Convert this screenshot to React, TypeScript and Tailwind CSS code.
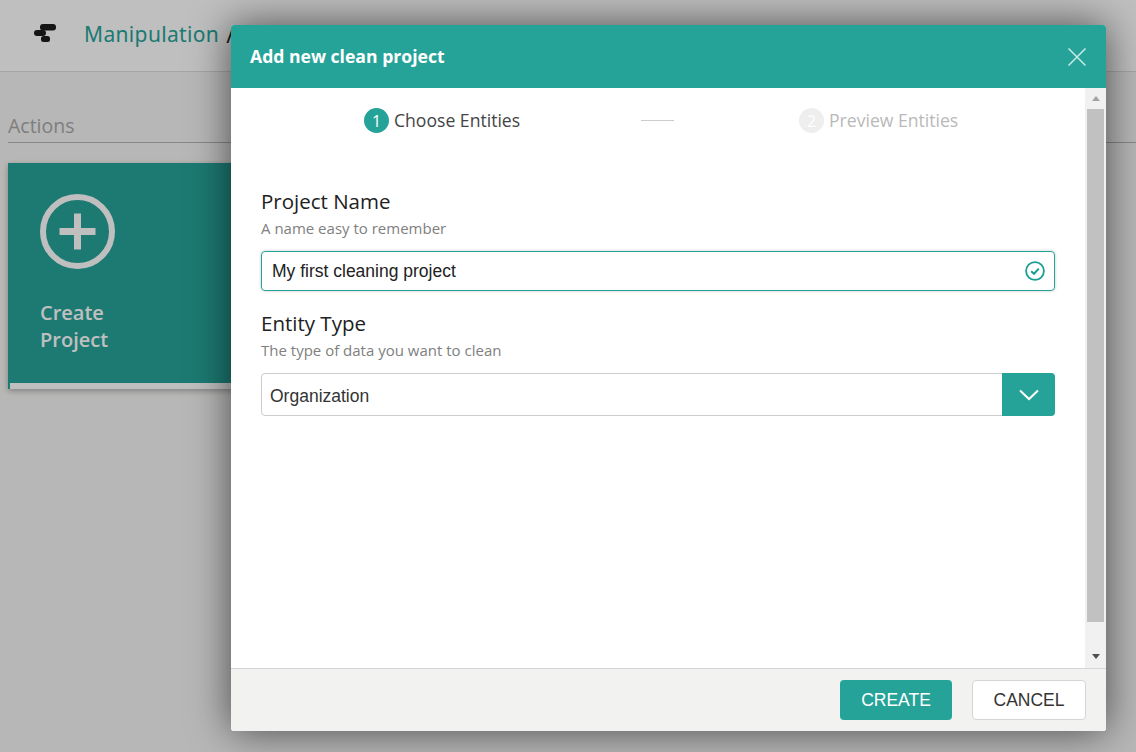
const OPEN_SANS = "font-['Open_Sans',sans-serif]"
const ARIAL = "font-['Liberation_Sans',sans-serif]"

function Logo() {
  return (
    <svg width="22" height="18" viewBox="0 0 22 18" className="block">
      <rect x="6" y="0" width="16" height="6.5" rx="3" fill="#1c1c1c" />
      <rect x="0" y="6" width="12" height="6" rx="3" fill="#1c1c1c" />
      <rect x="7" y="12" width="9" height="6" rx="2.5" fill="#1c1c1c" />
    </svg>
  )
}

function PlusCircle() {
  return (
    <svg width="76" height="76" viewBox="0 0 76 76" className="block">
      <circle cx="37.5" cy="37.5" r="34.5" fill="none" stroke="#fff" strokeWidth="6" />
      <rect x="34" y="19.5" width="7" height="36" fill="#fff" />
      <rect x="19.5" y="34" width="36" height="7" fill="#fff" />
    </svg>
  )
}

function CloseIcon() {
  return (
    <svg width="18" height="18" viewBox="0 0 18 18" className="block">
      <path d="M0.5 0.5 L17.5 17.5 M17.5 0.5 L0.5 17.5" stroke="#c8ebe7" strokeWidth="1.5" fill="none" />
    </svg>
  )
}

function CheckCircle() {
  return (
    <svg width="20" height="20" viewBox="0 0 20 20" className="block">
      <circle cx="10" cy="10" r="8.9" fill="none" stroke="#1a9e92" strokeWidth="1.8" />
      <path d="M6.2 10.2 L9 12.8 L13.8 7.6" fill="none" stroke="#1a9e92" strokeWidth="2" />
    </svg>
  )
}

function Chevron() {
  return (
    <svg width="20" height="12" viewBox="0 0 20 12" className="block">
      <path d="M1 1.5 L10 10 L19 1.5" fill="none" stroke="#fff" strokeWidth="2" />
    </svg>
  )
}

function Step({ n, label, active }: { n: number; label: string; active?: boolean }) {
  return (
    <div className="flex items-center gap-[5px]">
      <span
        className={`flex h-[25px] w-[25px] items-center justify-center rounded-full text-[16px] ${
          active ? 'bg-[#26a399] text-white' : 'bg-[#eeeeee] text-white'
        }`}
      >
        {n}
      </span>
      <span className={`-mt-[2px] text-[17.6px] leading-6 ${active ? 'text-[#444444]' : 'text-[#b9b9b9]'}`}>{label}</span>
    </div>
  )
}

function Field({ title, hint, children }: { title: string; hint: string; children: React.ReactNode }) {
  return (
    <div>
      <div className="text-[20.5px] font-medium leading-7 text-[#212121]">{title}</div>
      <div className="mt-[3px] text-[15px] leading-5 text-[#808080]">{hint}</div>
      {children}
    </div>
  )
}

export default function App() {
  return (
    <div className={`relative h-[752px] w-[1136px] overflow-hidden bg-[#f5f5f4] ${OPEN_SANS}`}>
      <header className="flex h-[72px] items-center border-b border-[#dddddd] bg-white pb-[2px] pl-[34px]">
        <div className="-mt-[4px]">
          <Logo />
        </div>
        <span className="ml-[28px] font-['Noto_Sans',sans-serif] text-[21px] tracking-[0.35px] text-[#26a399]">Manipulation</span>
        <span className="ml-[7px] text-[23px] text-[#222222]">/</span>
      </header>

      <main className="pl-2 pt-[41px]">
        <h2 className="h-[30px] border-b border-[#b5b5b5] text-[19.5px] leading-[25px] text-[#a8a8a8]">Actions</h2>
        <div className="mt-5 flex h-[226px] w-[280px] flex-col justify-between border-l-2 border-[#26a399] bg-[#26a399] shadow-[0_2px_6px_rgba(0,0,0,0.3)]">
          <div className="pl-[30px] pt-[31px]">
            <PlusCircle />
            <div className="-mt-px pt-[30px] text-[20px] font-semibold leading-[27px] text-white">
              Create
              <br />
              Project
            </div>
          </div>
          <div className="h-[6px] bg-white" />
        </div>
      </main>

      <div className="absolute inset-0 bg-black/25" />

      <div className="absolute left-[231px] top-[25px] flex h-[706px] w-[875px] flex-col rounded-[3px] bg-white shadow-[0_0_40px_rgba(0,0,0,0.6)]">
        <div className="flex h-[63px] shrink-0 items-center justify-between rounded-t-[3px] bg-[#26a399] pl-[19px] pr-[20px]">
          <span className="text-[17.6px] font-bold text-white">Add new clean project</span>
          <CloseIcon />
        </div>

        <div className="flex min-h-0 flex-1">
          <div className="flex-1 px-[30px]">
            <div className="relative h-[65px]">
              <div className="absolute left-[103px] top-[20px]">
                <Step n={1} label="Choose Entities" active />
              </div>
              <div className="absolute left-[380px] top-[32px] h-px w-[33px] bg-[#cccccc]" />
              <div className="absolute left-[538px] top-[20px]">
                <Step n={2} label="Preview Entities" />
              </div>
            </div>

            <div className="pt-[34px]">
              <Field title="Project Name" hint="A name easy to remember">
                <div className="mt-[13px] flex h-10 items-center justify-between rounded-[4px] border border-[#26a399] pl-[10px] pr-[9px] shadow-[0_0_3px_rgba(0,0,0,0.25)]">
                  <span className={`${ARIAL} text-[17.5px] text-[#222222]`}>My first cleaning project</span>
                  <CheckCircle />
                </div>
              </Field>
              <div className="mt-[18px]">
                <Field title="Entity Type" hint="The type of data you want to clean">
                  <div className="mt-[13px] flex h-[43px] rounded-[4px] border border-[#cccccc]">
                    <span className={`${ARIAL} flex-1 pl-2 text-[17.5px] leading-[44px] text-[#333333]`}>Organization</span>
                    <span className="-my-px -mr-px flex w-[53px] items-center justify-center rounded-r-[4px] bg-[#26a399]">
                      <Chevron />
                    </span>
                  </div>
                </Field>
              </div>
            </div>
          </div>

          <div className="flex w-[21px] shrink-0 flex-col items-center bg-[#f1f1f1] px-[2px]">
            <div className="flex h-[21px] items-center justify-center">
              <div className="h-0 w-0 border-x-[4.5px] border-b-[5px] border-x-transparent border-b-[#a3a3a3]" />
            </div>
            <div className="h-[513px] w-full bg-[#c1c1c1]" />
            <div className="flex h-[46px] items-end justify-center pb-[9px]">
              <div className="h-0 w-0 border-x-[4.5px] border-t-[5px] border-x-transparent border-t-[#505050]" />
            </div>
          </div>
        </div>

        <div className={`${ARIAL} flex h-[63px] shrink-0 items-center justify-end gap-5 rounded-b-[3px] border-t border-[#d5d5d5] bg-[#f2f2f1] pr-5`}>
          <button className="h-10 w-[112px] rounded-[4px] bg-[#26a399] text-[17.5px] text-white">CREATE</button>
          <button className="h-10 w-[114px] rounded-[4px] border border-[#d5d5d5] bg-white text-[17.5px] text-[#333333]">CANCEL</button>
        </div>
      </div>
    </div>
  )
}
